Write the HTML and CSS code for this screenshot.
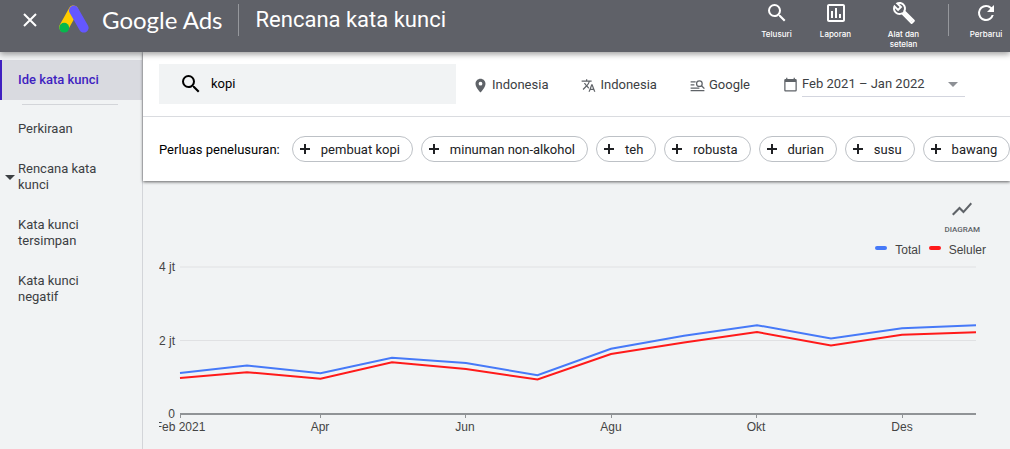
FILE: index.html
```html
<!DOCTYPE html>
<html lang="id">
<head>
<meta charset="utf-8">
<meta name="viewport" content="width=device-width, initial-scale=1">
<title>Rencana kata kunci - Google Ads</title>
<link rel="stylesheet" href="styles.css">
</head>
<body>
<header class="header">
  <button class="close" type="button" aria-label="Tutup">
    <svg width="16" height="16" viewBox="0 0 16 16"><path d="M2 2l12 12M14 2L2 14" fill="none" stroke="#fff" stroke-width="2"/></svg>
  </button>
  <a class="brand" href="#">
    <svg class="brand-logo" width="30" height="28" viewBox="0 0 30 28" aria-hidden="true">
      <path d="M5 22.200L14.500 5.200" stroke="#fc0" stroke-width="9.600" stroke-linecap="round"/>
      <path d="M14.800 5.400L24.800 22.800" stroke="#6457ff" stroke-width="9.600" stroke-linecap="round"/>
      <circle cx="5.200" cy="22.700" r="4.900" fill="#06b84c"/>
    </svg>
    <span class="brand-name">Google Ads</span>
  </a>
  <h1 class="title">Rencana kata kunci</h1>
  <nav class="tools" aria-label="Alat">
    <button class="tool" type="button">
      <svg viewBox="0 0 24 24"><path d="M15.500 14h-.79l-.28-.27A6.470 6.470 0 0 0 16 9.500 6.500 6.500 0 1 0 9.500 16c1.610 0 3.090-.59 4.230-1.570l.27.28v.79l5 4.990L20.490 19l-4.990-5zm-6 0C7.010 14 5 11.990 5 9.500S7.010 5 9.500 5 14 7.010 14 9.500 11.990 14 9.500 14z"/></svg>
      <span>Telusuri</span>
    </button>
    <button class="tool" type="button">
      <svg viewBox="0 0 24 24"><path d="M19 3H5c-1.100 0-2 .9-2 2v14c0 1.100.9 2 2 2h14c1.100 0 2-.9 2-2V5c0-1.100-.9-2-2-2zm0 16H5V5h14v14zM7 10h2v7H7zm4-3h2v10h-2zm4 6h2v4h-2z"/></svg>
      <span>Laporan</span>
    </button>
    <button class="tool tool-settings" type="button">
      <svg viewBox="0 0 24 24"><path d="M22.610 18.990l-9.080-9.080c.93-2.340.45-5.100-1.440-7C9.790.61 6.210.4 3.660 2.260L7.500 6.110 6.080 7.520 2.250 3.690C.39 6.230.6 9.820 2.900 12.110c1.860 1.860 4.570 2.350 6.890 1.480l9.110 9.110c.39.39 1.020.39 1.410 0l2.300-2.300c.4-.38.4-1.010 0-1.410zm-3 1.600l-9.460-9.460c-.61.45-1.290.72-2 .82-1.360.2-2.790-.21-3.830-1.250C3.370 9.760 2.930 8.500 3 7.260l3.090 3.090 4.240-4.240-3.090-3.090c1.240-.07 2.490.37 3.440 1.310 1.080 1.080 1.490 2.570 1.240 3.960-.12.71-.42 1.370-.88 1.960l9.450 9.450-.88.89z"/><path d="M11 11l9 9" stroke="currentColor" stroke-width="2.400"/></svg>
      <span>Alat dan setelan</span>
    </button>
    <button class="tool tool-refresh" type="button">
      <svg viewBox="0 0 24 24"><path d="M17.650 6.350A7.960 7.960 0 0 0 12 4a8 8 0 1 0 7.730 10h-2.080A6 6 0 1 1 12 6c1.660 0 3.140.69 4.220 1.780L13 11h7V4l-2.350 2.350z"/></svg>
      <span>Perbarui</span>
    </button>
  </nav>
</header>

<div class="layout">
  <nav class="sidebar" aria-label="Menu">
    <a class="nav-item nav-active" href="#">Ide kata kunci</a>
    <hr class="nav-rule">
    <a class="nav-item" href="#">Perkiraan</a>
    <a class="nav-item nav-parent" href="#">Rencana kata kunci</a>
    <a class="nav-item" href="#">Kata kunci tersimpan</a>
    <a class="nav-item" href="#">Kata kunci negatif</a>
  </nav>

  <main class="main">
    <section class="panel">
      <div class="filters">
        <label class="search">
          <svg width="24" height="24" viewBox="0 0 24 24" aria-hidden="true"><path d="M15.500 14h-.79l-.28-.27A6.470 6.470 0 0 0 16 9.500 6.500 6.500 0 1 0 9.500 16c1.610 0 3.090-.59 4.230-1.570l.27.28v.79l5 4.990L20.490 19l-4.990-5zm-6 0C7.010 14 5 11.990 5 9.500S7.010 5 9.500 5 14 7.010 14 9.500 11.990 14 9.500 14z"/></svg>
          <input class="search-input" type="text" value="kopi" aria-label="Kata kunci">
        </label>
        <button class="filter" type="button">
          <svg viewBox="0 0 24 24"><path d="M12 1C7.600 1 4 4.600 4 9c0 6 8 14 8 14s8-8 8-14c0-4.400-3.600-8-8-8zm0 11a3 3 0 1 1 0-6 3 3 0 0 1 0 6z"/></svg>
          <span>Indonesia</span>
        </button>
        <button class="filter" type="button">
          <svg viewBox="0 0 24 24"><path d="M12.870 15.070l-2.540-2.510.03-.03A17.520 17.520 0 0 0 14.070 6H17V4h-7V2H8v2H1v2h11.170C11.500 7.920 10.440 9.750 9 11.350 8.070 10.320 7.300 9.190 6.690 8h-2c.73 1.630 1.730 3.170 2.980 4.560l-5.090 5.020L4 19l5-5 3.110 3.110.76-2.040zM18.500 10h-2L12 22h2l1.120-3h4.750L21 22h2l-4.500-12zm-2.620 7l1.620-4.330L19.120 17h-3.240z"/></svg>
          <span>Indonesia</span>
        </button>
        <button class="filter" type="button">
          <svg viewBox="0 0 24 24"><path d="M1 5h8v2H1zM1 10h6v2H1zM1 15h14v2H1zM1 19h22v2H1z"/><circle cx="15" cy="9" r="4.500" fill="none" stroke="currentColor" stroke-width="2"/><path d="M18 12l5 5" stroke="currentColor" stroke-width="2.200"/></svg>
          <span>Google</span>
        </button>
        <label class="date">
          <svg viewBox="0 0 24 24" aria-hidden="true"><path d="M20 3h-1V1h-2v2H7V1H5v2H4a2 2 0 0 0-2 2v16c0 1.100.9 2 2 2h16a2 2 0 0 0 2-2V5a2 2 0 0 0-2-2zm0 18H4V8h16v13z"/></svg>
          <span class="date-field">
            <select class="date-select" aria-label="Rentang tanggal"><option>Feb 2021 – Jan 2022</option></select>
          </span>
        </label>
      </div>
      <div class="expand">
        <span class="expand-label">Perluas penelusuran:</span>
        <button class="chip" type="button"><svg viewBox="0 0 12 12"><path d="M6 1v10M1 6h10"/></svg>pembuat kopi</button>
        <button class="chip" type="button"><svg viewBox="0 0 12 12"><path d="M6 1v10M1 6h10"/></svg>minuman non-alkohol</button>
        <button class="chip" type="button"><svg viewBox="0 0 12 12"><path d="M6 1v10M1 6h10"/></svg>teh</button>
        <button class="chip" type="button"><svg viewBox="0 0 12 12"><path d="M6 1v10M1 6h10"/></svg>robusta</button>
        <button class="chip" type="button"><svg viewBox="0 0 12 12"><path d="M6 1v10M1 6h10"/></svg>durian</button>
        <button class="chip" type="button"><svg viewBox="0 0 12 12"><path d="M6 1v10M1 6h10"/></svg>susu</button>
        <button class="chip" type="button"><svg viewBox="0 0 12 12"><path d="M6 1v10M1 6h10"/></svg>bawang</button>
      </div>
    </section>

    <section class="report">
      <button class="diagram" type="button">
        <svg width="24" height="24" viewBox="0 0 24 24"><path d="M3.500 18.500l6-6 4 4L22 6.900l-1.400-1.400-7.100 8-4-4L2 17z"/></svg>
        <span>DIAGRAM</span>
      </button>
      <div class="legend">
        <span class="key key-total">Total</span>
        <span class="key key-mobile">Seluler</span>
      </div>
      <svg class="chart" viewBox="0 0 827 180" role="img" aria-label="Volume penelusuran bulanan">
        <path class="grid" d="M21 9H817M21 82.500H817"/>
        <path class="axis" d="M21 156H817"/>
        <path class="tick" d="M21.500 156v4M161.500 156v4M306.500 156v4M452.500 156v4M597.500 156v4M743.500 156v4"/>
        <polyline class="line line-total" points="21,115 88,107.500 161.500,115.300 233,99.800 307,105 378.500,117.200 452,90.800 525,77.800 598,67.200 672,80.500 743,70.200 817,67.200"/>
        <polyline class="line line-mobile" points="21,120 88,114.200 161.500,120.800 233,104.300 307,111 378.500,121.500 452,96 525,84.500 598,74 672,87.500 743,76.800 817,74.300"/>
        <g text-anchor="end">
          <text x="16" y="13">4 jt</text>
          <text x="16" y="87">2 jt</text>
          <text x="16" y="160">0</text>
        </g>
        <g text-anchor="middle">
          <text x="21" y="173">Feb 2021</text>
          <text x="161" y="173">Apr</text>
          <text x="306" y="173">Jun</text>
          <text x="452" y="173">Agu</text>
          <text x="597" y="173">Okt</text>
          <text x="743" y="173">Des</text>
        </g>
      </svg>
    </section>
  </main>
</div>
</body>
</html>
```
FILE: styles.css
```css
* { box-sizing: border-box; }

body {
  margin: 0;
  min-height: 100vh;
  display: flex;
  flex-direction: column;
  overflow-x: hidden;
  background: #f1f3f4;
  color: #3c4043;
  font: 13px/16px Roboto, sans-serif;
}

button, input, select {
  margin: 0;
  padding: 0;
  border: 0;
  background: none;
  color: inherit;
  font: inherit;
}

a { color: inherit; text-decoration: none; }

svg { display: block; flex: none; fill: currentColor; }

/* Header */
.header {
  position: relative;
  z-index: 2;
  display: flex;
  align-items: flex-start;
  height: 52px;
  padding-left: 22px;
  background: #5f6168;
  color: #fff;
  box-shadow: 0 2px 6px rgba(0, 0, 0, 0.4);
}

.close { padding: 12px 0; }

.brand {
  display: flex;
  align-items: center;
  gap: 13px;
  height: 32px;
  margin: 4px 0 0 21px;
  padding-right: 15px;
  border-right: 1px solid #96989d;
}

.brand-logo { margin-bottom: 2px; }

.brand-name {
  font: 24px/32px Lato, sans-serif;
}

.title {
  margin: 4px 0 0 17px;
  font: 22px/32px Roboto, sans-serif;
  white-space: nowrap;
}

.tools {
  display: flex;
  margin-left: auto;
  padding-top: 1px;
  font: 500 8px/10px Inter, sans-serif;
}

.tool {
  display: flex;
  flex-direction: column;
  align-items: center;
  gap: 4px;
  width: 59px;
}

.tool svg { width: 24px; height: 24px; }
.tool-settings { width: 77px; padding: 0 16px; }
.tool-refresh { position: relative; width: 68px; padding-left: 20px; }

.tool-refresh::before {
  content: "";
  position: absolute;
  top: 3px;
  left: 6px;
  width: 1px;
  height: 32px;
  background: #96989d;
}

/* Layout */
.layout { display: flex; flex: 1; }

.sidebar {
  flex: none;
  width: 143px;
  padding-top: 8px;
  border-right: 1px solid #d3d5d9;
}

.nav-item {
  display: block;
  padding: 12px 36px 12px 18px;
}

.nav-active {
  padding-right: 0;
  background: #d9dae0;
  color: #3f1fc0;
  font-weight: 500;
  box-shadow: inset 2px 0 #3f1fc0;
}

.nav-rule {
  margin: 4px 24px 4px 22px;
  border: 0;
  border-top: 1px solid #d3d5d9;
}

.nav-parent { position: relative; }

.nav-parent::before {
  content: "";
  position: absolute;
  top: 26px;
  left: 5px;
  border: 5px solid transparent;
  border-top-color: #3c4043;
  border-bottom: 0;
}

.main { flex: 1; min-width: 0; }

/* Search panel */
.panel {
  background: #fff;
  box-shadow: 0 1px 3px rgba(0, 0, 0, 0.6);
}

.filters {
  display: flex;
  align-items: center;
  height: 65px;
  padding: 0 45px 0 16px;
  border-bottom: 1px solid #dadce0;
}

.search {
  display: flex;
  flex: 1;
  align-items: center;
  gap: 8px;
  min-width: 120px;
  height: 40px;
  margin-right: 17px;
  padding-left: 20px;
  background: #f1f3f4;
  color: #000;
}

.search-input {
  width: 100%;
  min-width: 0;
  outline: 0;
}

.filter {
  display: flex;
  align-items: center;
  gap: 4px;
  margin-right: 33px;
  padding-top: 2px;
}

.filter svg, .date svg { width: 15px; height: 15px; color: #5f6368; }

.date {
  display: flex;
  align-items: center;
  gap: 4px;
}

.date-field {
  position: relative;
  width: 163px;
  border-bottom: 1px solid #d3d5de;
}

.date-field::after {
  content: "";
  position: absolute;
  top: 10px;
  right: 7px;
  border: 5px solid transparent;
  border-top-color: #8d9095;
  border-bottom: 0;
}

.date-select {
  width: 100%;
  height: 24px;
  appearance: none;
}

.expand {
  display: flex;
  align-items: center;
  gap: 8px;
  height: 64px;
  padding-left: 16px;
  overflow: hidden;
  color: #000;
  white-space: nowrap;
}

.expand-label {
  margin-right: 4px;
  padding-top: 2px;
}

.chip {
  display: flex;
  flex: none;
  align-items: center;
  gap: 10px;
  height: 26px;
  padding: 2px 12px 0 6px;
  border: 1px solid #bdc1c6;
  border-radius: 13px;
  color: #202124;
}

.chip svg {
  width: 12px;
  height: 12px;
  margin-bottom: 2px;
  stroke: #202124;
  stroke-width: 2;
}

/* Report */
.report {
  display: flex;
  flex-direction: column;
  align-items: flex-end;
  padding: 16px 24px 8px 16px;
}

.diagram {
  display: flex;
  flex-direction: column;
  align-items: center;
  gap: 4px;
  margin-right: 6px;
  color: #5f6368;
  font: 500 8px/10px Roboto, sans-serif;
}

.legend {
  display: flex;
  gap: 8px;
  margin-top: 7px;
  color: #444;
  font: 12px/16px "Liberation Sans", sans-serif;
}

.key {
  display: flex;
  align-items: center;
  gap: 8px;
}

.key::before {
  content: "";
  width: 12px;
  height: 4px;
  margin-bottom: 4px;
  border-radius: 2px;
}

.key-total::before { background: #4679f8; }
.key-mobile::before { background: #ff1a1a; }

.chart {
  width: 100%;
  height: auto;
  overflow: hidden;
  font: 12px "Liberation Sans", sans-serif;
  fill: #444;
}

.grid { stroke: #e0e1e3; }
.axis { stroke: #909396; stroke-width: 2; }
.tick { stroke: #909396; }
.line { fill: none; stroke-width: 2; }
.line-total { stroke: #4679f8; }
.line-mobile { stroke: #ff1a1a; }
```
